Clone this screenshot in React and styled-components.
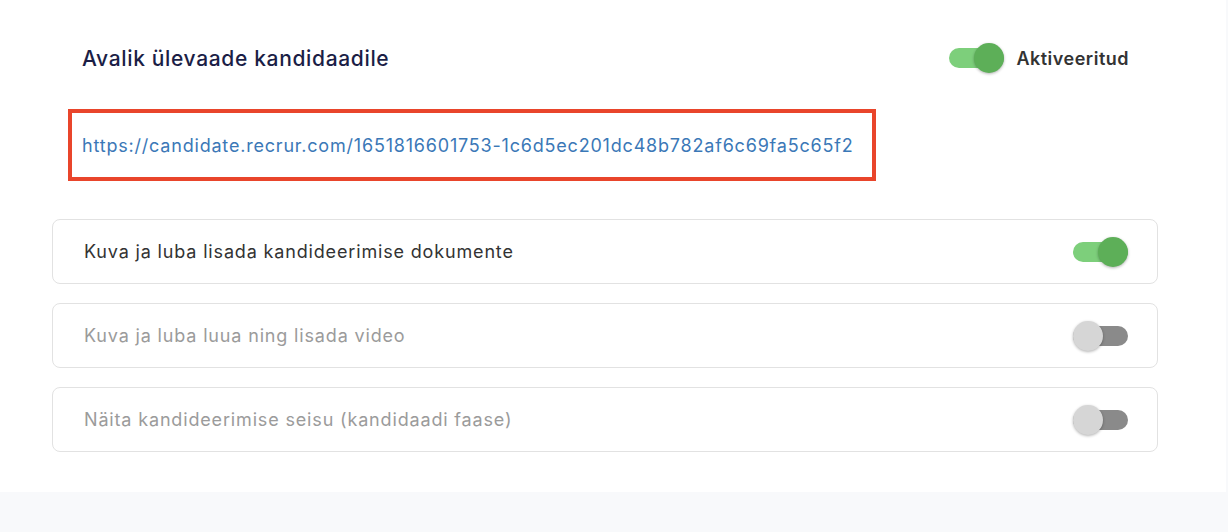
import React, { useState } from "react";
import styled, { createGlobalStyle } from "styled-components";

const GlobalStyle = createGlobalStyle`
  body {
    margin: 0;
    background: #f8f9fb;
    font-family: Inter, "Open Sans", sans-serif;
  }
`;

const Panel = styled.section`
  width: 1226px;
  background: #fff;
  padding: 38px 0 40px;
  box-sizing: border-box;
`;

const Header = styled.div`
  display: flex;
  align-items: center;
  justify-content: space-between;
  height: 40px;
  padding: 0 97px 0 82px;
`;

const Title = styled.h2`
  margin: 0;
  font-size: 21px;
  letter-spacing: 0.65px;
  font-weight: 500;
  color: #1b1e46;
`;

const Status = styled.label`
  display: flex;
  align-items: center;
  gap: 12px;
  font-size: 18px;
  letter-spacing: 0.5px;
  font-weight: 600;
  color: #333;
`;

const UrlBox = styled.div`
  margin: 31px 0 0 68px;
  width: 808px;
  height: 72px;
  box-sizing: border-box;
  border: 4px solid #e9452b;
  display: flex;
  align-items: center;
  padding-left: 10px;
`;

const Link = styled.a`
  font-size: 18px;
  letter-spacing: 0.8px;
  color: #3b78b7;
  text-decoration: none;
`;

const List = styled.div`
  display: flex;
  flex-direction: column;
  gap: 19px;
  margin: 38px 68px 0 52px;
`;

const Row = styled.div`
  height: 65px;
  box-sizing: border-box;
  border: 1px solid #e2e2e2;
  border-radius: 8px;
  display: flex;
  align-items: center;
  justify-content: space-between;
  padding: 0 29px 0 31px;
  font-size: 18px;
  letter-spacing: 0.84px;
  color: ${(p) => (p.$on ? "#333" : "#9b9b9b")};
`;

const Track = styled.button`
  position: relative;
  width: 55px;
  height: 20px;
  border: 0;
  padding: 0;
  border-radius: 10px;
  cursor: pointer;
  background: ${(p) => (p.$on ? "#7dcf7b" : "#8a8a8a")};
`;

const Knob = styled.span`
  position: absolute;
  top: -5px;
  left: ${(p) => (p.$on ? "25px" : "0")};
  width: 30px;
  height: 30px;
  border-radius: 50%;
  background: ${(p) => (p.$on ? "#5daf58" : "#d6d6d6")};
  box-shadow: 0 1px 3px rgba(0, 0, 0, 0.3);
`;

function Toggle({ on, onChange }) {
  return (
    <Track type="button" $on={on} onClick={() => onChange(!on)}>
      <Knob $on={on} />
    </Track>
  );
}

const options = [
  { label: "Kuva ja luba lisada kandideerimise dokumente", on: true },
  { label: "Kuva ja luba luua ning lisada video", on: false },
  { label: "Näita kandideerimise seisu (kandidaadi faase)", on: false },
];

export default function App() {
  const [active, setActive] = useState(true);
  const [flags, setFlags] = useState(options.map((o) => o.on));

  return (
    <>
      <GlobalStyle />
      <Panel>
        <Header>
          <Title>Avalik ülevaade kandidaadile</Title>
          <Status>
            <Toggle on={active} onChange={setActive} />
            Aktiveeritud
          </Status>
        </Header>
        <UrlBox>
          <Link href="#">
            https://candidate.recrur.com/1651816601753-1c6d5ec201dc48b782af6c69fa5c65f2
          </Link>
        </UrlBox>
        <List>
          {options.map((o, i) => (
            <Row key={o.label} $on={flags[i]}>
              {o.label}
              <Toggle
                on={flags[i]}
                onChange={(v) =>
                  setFlags((f) => f.map((x, j) => (j === i ? v : x)))
                }
              />
            </Row>
          ))}
        </List>
      </Panel>
    </>
  );
}
